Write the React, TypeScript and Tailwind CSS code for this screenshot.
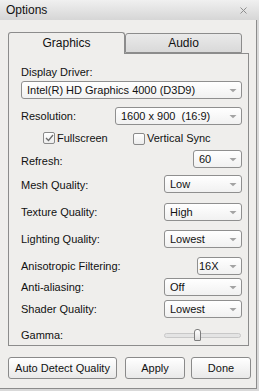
import React from 'react';

function Arrow() {
  return (
    <svg width="8" height="5" viewBox="0 0 8 5" className="shrink-0">
      <path d="M0.5 1 L7.5 1 L4 4.2 Z" fill="#a3a3a3" />
    </svg>
  );
}

function Select({ value, className, textClass }: { value: string; className: string; textClass?: string }) {
  return (
    <div
      className={`flex h-[18px] items-center justify-between rounded-[3px] border border-[#8f8f8f] bg-gradient-to-b from-white to-[#f1f1f1] pr-[4px] ${className}`}
    >
      <span className={`whitespace-pre leading-none ${textClass ?? 'pl-[5px]'}`}>{value}</span>
      <Arrow />
    </div>
  );
}

function Row({ label, children, mt, labelClass }: { label: string; children: React.ReactNode; mt: string; labelClass?: string }) {
  return (
    <div className={`flex h-[18px] justify-between ${mt}`}>
      <span className={`leading-none ${labelClass ?? 'self-center'}`}>{label}</span>
      {children}
    </div>
  );
}

function Check({ label, checked }: { label: string; checked?: boolean }) {
  return (
    <div className="flex items-center gap-[2px]">
      <div className="flex h-[12px] w-[12px] items-center justify-center rounded-[2px] border border-[#8a8a8a] bg-gradient-to-b from-white to-[#ececec]">
        {checked && (
          <svg width="9" height="8" viewBox="0 0 9 8">
            <path d="M1 4 L3.5 6.5 L8 1" fill="none" stroke="#6a6a6a" strokeWidth="1.3" />
          </svg>
        )}
      </div>
      <span className="leading-none">{label}</span>
    </div>
  );
}

function Button({ label, className }: { label: string; className: string }) {
  return (
    <div
      className={`flex h-[22px] items-center justify-center rounded-[3px] border border-[#8a8a8a] bg-gradient-to-b from-white to-[#e9e9e9] ${className}`}
    >
      {label}
    </div>
  );
}

export default function App() {
  return (
    <div className="h-[391px] w-[259px] bg-[#d9d9d9] text-[11px] text-[#111] [font-family:'Liberation_Sans',Arial,sans-serif]">
      <div className="flex h-[389px] w-[257px] flex-col border-r border-b border-[#8c8c8c] bg-[#efeeec]">
        {/* title bar */}
        <div className="flex h-[20px] w-[259px] items-center justify-between bg-gradient-to-b from-[#f0f0f0] to-[#d6d6d6] pl-[6px] pr-[12px] text-[12px]">
          <span>Options</span>
          <svg width="7" height="7" viewBox="0 0 7 7">
            <path d="M0.5 0.5 L6.5 6.5 M6.5 0.5 L0.5 6.5" stroke="#8e8e8e" strokeWidth="1" />
          </svg>
        </div>

        {/* tabs */}
        <div className="mt-[12px] flex h-[22px] pl-[8px]">
          <div className="relative z-10 flex h-[22px] w-[117px] items-center justify-center rounded-t-[3px] border border-b-0 border-[#8c8c8c] bg-[#efeeec] pb-[2px] text-[12px]">
            Graphics
          </div>
          <div className="mt-[1px] flex h-[20px] w-[117px] items-center justify-center rounded-t-[3px] border border-[#8c8c8c] bg-gradient-to-b from-[#eaeaea] to-[#d9d9d9] text-[12px]">
            Audio
          </div>
        </div>

        {/* panel */}
        <div className="-mt-[1px] ml-[8px] flex h-[293px] w-[241px] flex-col border border-[#8c8c8c] pt-[12px] pr-[6px] pl-[12px]">
          <span className="h-[13px] leading-[13px]">Display Driver:</span>
          <Select value="Intel(R) HD Graphics 4000 (D3D9)" className="mt-[2px] w-full" />

          <Row label="Resolution:" mt="mt-[8px]">
            <Select value="1600 x 900  (16:9)" className="w-[127px]" />
          </Row>

          <div className="mt-[7px] flex h-[13px] pl-[22px]">
            <div className="w-[90px]">
              <Check label="Fullscreen" checked />
            </div>
            <Check label="Vertical Sync" />
          </div>

          <Row label="Refresh:" mt="mt-[5px]" labelClass="self-end pb-[1px]">
            <Select value="60" className="w-[49px]" />
          </Row>
          <Row label="Mesh Quality:" mt="mt-[7px]" labelClass="self-center pt-[3px]">
            <Select value="Low" className="w-[78px]" />
          </Row>
          <Row label="Texture Quality:" mt="mt-[10px]">
            <Select value="High" className="w-[78px]" />
          </Row>
          <Row label="Lighting Quality:" mt="mt-[9px]">
            <Select value="Lowest" className="w-[78px]" />
          </Row>
          <Row label="Anisotropic Filtering:" mt="mt-[9px]">
            <Select value="16X" className="w-[45px]" textClass="pl-[1px]" />
          </Row>
          <Row label="Anti-aliasing:" mt="mt-[3px]">
            <Select value="Off" className="w-[78px]" />
          </Row>
          <Row label="Shader Quality:" mt="mt-[4px]">
            <Select value="Lowest" className="w-[78px]" />
          </Row>

          <div className="mt-[10px] flex h-[14px] items-center justify-between">
            <span className="leading-none">Gamma:</span>
            <div className="relative mr-[1px] h-[5px] w-[77px] rounded-full border border-[#c8c8c8] bg-[#e4e4e4]">
              <div className="absolute top-[-5px] left-[29px] h-[12px] w-[7px] rounded-t-[3px] rounded-b-[1px] border border-[#7d7d7d] bg-gradient-to-b from-white to-[#dedede]" />
            </div>
          </div>
        </div>

        {/* buttons */}
        <div className="mt-[11px] flex pl-[8px]">
          <Button label="Auto Detect Quality" className="w-[109px]" />
          <Button label="Apply" className="ml-[8px] w-[60px]" />
          <Button label="Done" className="ml-[6px] w-[60px]" />
        </div>
      </div>
    </div>
  );
}
